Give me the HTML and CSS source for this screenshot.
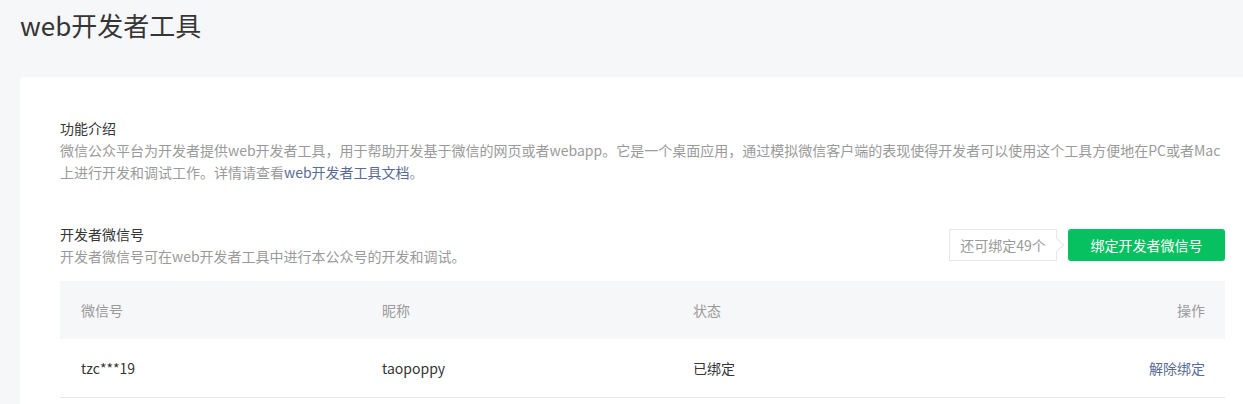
FILE: index.html
```html
<!DOCTYPE html>
<html lang="zh-CN">
<head>
<meta charset="utf-8">
<title>web开发者工具</title>
<link rel="stylesheet" href="styles.css">
</head>
<body>
<div class="page">
  <h1 class="page-title">web开发者工具</h1>
  <div class="card">
    <section class="intro">
      <h2 class="sec-title">功能介绍</h2>
      <p class="sec-desc">微信公众平台为开发者提供web开发者工具，用于帮助开发基于微信的网页或者webapp。它是一个桌面应用，通过模拟微信客户端的表现使得开发者可以使用这个工具方便地在PC或者Mac<br>上进行开发和调试工作。详情请查看<a class="link" href="#">web开发者工具文档</a>。</p>
    </section>
    <section class="dev">
      <div class="dev-head">
        <div class="dev-info">
          <h2 class="sec-title">开发者微信号</h2>
          <p class="sec-desc">开发者微信号可在web开发者工具中进行本公众号的开发和调试。</p>
        </div>
        <div class="dev-actions">
          <div class="quota">还可绑定49个</div>
          <button class="btn-primary">绑定开发者微信号</button>
        </div>
      </div>
      <div class="table">
        <div class="row head">
          <div>微信号</div>
          <div>昵称</div>
          <div>状态</div>
          <div class="op">操作</div>
        </div>
        <div class="row body">
          <div>tzc***19</div>
          <div>taopoppy</div>
          <div>已绑定</div>
          <div class="op"><a class="link" href="#">解除绑定</a></div>
        </div>
      </div>
    </section>
  </div>
</div>
</body>
</html>
```

FILE: styles.css
```css
html, body {
  margin: 0;
  padding: 0;
  background: #f6f7f9;
  overflow: hidden;
}
body {
  font-family: "Noto Sans CJK SC", "Noto Sans", sans-serif;
  color: #353535;
  font-size: 14px;
}
.page {
  padding: 0 0 0 20px;
  width: 1223px;
}
.page-title {
  margin: 0;
  padding-top: 8px;
  font-size: 26px;
  font-weight: 400;
  line-height: 34px;
  color: #353535;
  height: 69px;
}
.card {
  background: #fff;
  border-radius: 3px 0 0 0;
  padding: 40px 18px 40px 40px;
  min-height: 400px;
}
.sec-title {
  margin: 0;
  font-size: 14px;
  font-weight: 400;
  line-height: 22px;
  color: #353535;
}
.sec-desc {
  margin: 0;
  font-size: 14px;
  line-height: 22px;
  color: #9a9a9a;
}
.link {
  color: #576b95;
  text-decoration: none;
}
.dev {
  margin-top: 40px;
}
.dev-head {
  display: flex;
  align-items: center;
  justify-content: space-between;
}
.dev-actions {
  display: flex;
  align-items: center;
  gap: 11px;
}
.quota {
  position: relative;
  box-sizing: border-box;
  height: 32px;
  width: 108px;
  border: 1px solid #e4e8eb;
  line-height: 30px;
  text-align: center;
  color: #9a9a9a;
  font-size: 14px;
  background: #fff;
}
.quota::after {
  content: "";
  position: absolute;
  right: -6px;
  top: 50%;
  width: 9px;
  height: 9px;
  background: #fff;
  border-top: 1px solid #e4e8eb;
  border-right: 1px solid #e4e8eb;
  transform: translateY(-50%) rotate(45deg);
}
.btn-primary {
  height: 32px;
  width: 157px;
  border: 0;
  border-radius: 3px;
  background: #07c160;
  color: #fff;
  font-family: inherit;
  font-size: 14px;
  line-height: 32px;
  padding: 0;
}
.table {
  margin-top: 14px;
}
.row {
  display: grid;
  grid-template-columns: 301px 311px 1fr auto;
  align-items: center;
  padding: 0 20px 0 21px;
  height: 58px;
  line-height: 22px;
}
.row.head {
  background: #f6f7f9;
  color: #9a9a9a;
}
.row.body {
  border-bottom: 1px solid #e4e8eb;
  color: #353535;
}
.op {
  text-align: right;
}
```
